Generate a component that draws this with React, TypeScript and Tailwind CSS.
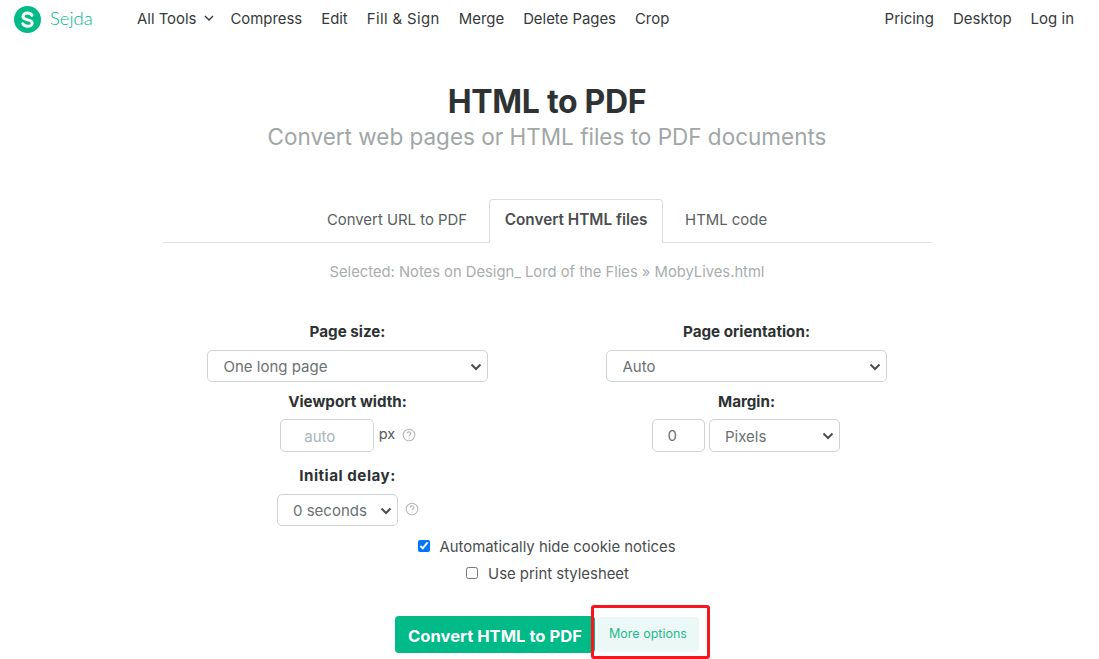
import React from "react";

function Help() {
  return (
    <svg width="14" height="14" viewBox="0 0 14 14" fill="none" className="shrink-0">
      <circle cx="7" cy="7" r="5.8" stroke="#b4b8b8" strokeWidth="1.1" />
      <path d="M5.3 5.6a1.75 1.75 0 1 1 2.6 1.5c-.6.35-.9.6-.9 1.2" stroke="#b4b8b8" strokeWidth="1.1" fill="none" />
      <circle cx="7" cy="10.1" r=".7" fill="#b4b8b8" />
    </svg>
  );
}

function Sel({ children, className }: { children: React.ReactNode; className: string }) {
  return (
    <div className={`relative ${className}`}>
      <select className="h-full w-full appearance-none rounded-[5px] border border-[#d0d3d3] bg-white pt-[3px] pl-[15.5px] text-[15px] text-[#6b7172]">
        {children}
      </select>
      <svg width="12" height="8" viewBox="0 0 12 8" className="pointer-events-none absolute top-[13px] right-[6px]">
        <path d="M1.5 1.5 6 6l4.5-4.5" fill="none" stroke="#4a4e4f" strokeWidth="2" />
      </svg>
    </div>
  );
}

function Label({ children, className = "" }: { children: React.ReactNode; className?: string }) {
  return <div className={`text-center text-[15.2px] leading-[20px] font-bold text-[#2e3233] ${className}`}>{children}</div>;
}

export default function App() {
  return (
    <div className="relative h-[659px] overflow-hidden bg-white pr-[5px] font-['Inter',sans-serif] text-[#363a3b]">
      <header className="flex h-[38px] items-center pr-[20px] pl-[14px] text-[14.9px]">
        <div className="flex w-[123px] items-center">
          <svg width="27" height="27" viewBox="0 0 27 27">
            <circle cx="13.5" cy="13.5" r="13.5" fill="#00ba88" />
            <path d="M18 9.2c-.8-1.5-2.5-2.3-4.5-2.3-2.6 0-4.5 1.4-4.5 3.5 0 4.6 9.2 2.4 9.2 6.5 0 2-1.9 3.4-4.6 3.4-2.2 0-4-1-4.8-2.6" fill="none" stroke="#fff" strokeWidth="3" strokeLinecap="round" />
          </svg>
          <span className="ml-[9px] font-['Lato',sans-serif] text-[18.5px] font-light text-[#00ba88]">Sejda</span>
        </div>
        <nav className="flex items-center gap-[19px]">
          <span className="mr-[-3px] flex items-center">
            All Tools
            <svg width="10" height="6" viewBox="0 0 10 6" className="mb-[2px] ml-[8px]">
              <path d="M1 1l4 4 4-4" fill="none" stroke="#363a3b" strokeWidth="1.4" />
            </svg>
          </span>
          <span>Compress</span>
          <span>Edit</span>
          <span className="tracking-[0.4px]">Fill &amp; Sign</span>
          <span>Merge</span>
          <span>Delete Pages</span>
          <span>Crop</span>
        </nav>
        <nav className="ml-auto flex items-center gap-[19px] text-[15px]">
          <span>Pricing</span>
          <span>Desktop</span>
          <span>Log in</span>
        </nav>
      </header>

      <main className="flex flex-col items-center">
        <h1 className="mt-[45px] text-[32px] leading-[37px] font-bold tracking-[-0.3px] text-[#2e3233]">HTML to PDF</h1>
        <p className="text-[22.5px] leading-[34px] text-[#a1a6a6]">Convert web pages or HTML files to PDF documents</p>

        <div className="mt-[45px] flex h-[44px] w-[768px] justify-center border-b border-[#dddddd] text-[14.9px]">
          <div className="flex h-[44px] items-center px-[15px] pb-[2px] text-[#5a5f60]">Convert URL to PDF</div>
          <div className="ml-[7px] flex h-[44px] w-[174px] items-center justify-center rounded-t-[4px] border border-b-white border-[#dddddd] bg-white pb-[2px] text-[15.3px] font-semibold text-[#4a4e4f]">
            Convert HTML files
          </div>
          <div className="ml-[7px] flex h-[44px] items-center px-[15px] pb-[2px] text-[#5a5f60]">HTML code</div>
        </div>

        <p className="mt-[19px] text-[14.75px] leading-[20px] text-[#a9adad]">Selected: Notes on Design_ Lord of the Flies » MobyLives.html</p>

        <div className="mt-[40px] grid w-[798px] grid-cols-2">
          <div className="flex flex-col items-center">
            <Label>Page size:</Label>
            <Sel className="mt-[8px] h-8 w-[281px]"><option>One long page</option></Sel>
            <div className="mt-[10px]"><Label>Viewport width:</Label></div>
            <div className="mt-[7px] ml-[1px] flex h-[33px] items-center">
              <input placeholder="auto" className="h-[33px] w-[94px] rounded-[5px] border border-[#d0d3d3] pt-[2px] pr-[14px] text-center text-[15px] placeholder:text-[#a9b4bd]" />
              <span className="mb-[3px] ml-[5px] text-[14.5px] text-[#555a5b]">px</span>
              <span className="mb-[1px] ml-[7px]"><Help /></span>
            </div>
            <div className="mt-[14px]"><Label className="tracking-[0.5px]">Initial delay:</Label></div>
            <div className="mt-[8px] flex items-center">
              <Sel className="h-[32px] w-[121px]"><option>0 seconds</option></Sel>
              <span className="mb-[3px] ml-[7px]"><Help /></span>
            </div>
          </div>
          <div className="flex flex-col items-center">
            <Label>Page orientation:</Label>
            <Sel className="mt-[8px] h-8 w-[281px]"><option>Auto</option></Sel>
            <div className="mt-[10px]"><Label>Margin:</Label></div>
            <div className="mt-[7px] mr-[2px] flex h-[33px] gap-[4px]">
              <input defaultValue="0" className="h-[33px] w-[53px] rounded-[5px] border border-[#d0d3d3] pl-[15px] text-[15px] text-[#6b7172]" />
              <Sel className="h-[33px] w-[131px]"><option>Pixels</option></Sel>
            </div>
          </div>
        </div>

        <label className="mt-[11px] flex h-[20px] items-center gap-[9px] text-[14.9px] text-[#4a4e4f]">
          <input type="checkbox" defaultChecked className="mb-[3px] h-[12px] w-[12px]" />
          Automatically hide cookie notices
        </label>
        <label className="mt-[7px] flex h-[20px] items-center gap-[10px] text-[14.9px] text-[#4a4e4f]">
          <input type="checkbox" className="mb-[3px] ml-[1px] h-[12px] w-[12px]" />
          Use print stylesheet
        </label>

        <div className="mt-[32px] flex items-center">
          <button className="h-[37px] w-[200px] rounded-[4px] bg-[#00ba88] pt-[3px] text-[16.6px] font-bold text-white">Convert HTML to PDF</button>
          <button className="ml-[2px] h-[35px] w-[102px] rounded-[4px] bg-[#ecf8f5] text-[12.5px] text-[#1fb88f]">More options</button>
        </div>
      </main>

      <div className="absolute top-[605px] left-[591px] h-[54px] w-[119px] rounded-[3px] border-[3px] border-[#f8151c]" />
    </div>
  );
}
